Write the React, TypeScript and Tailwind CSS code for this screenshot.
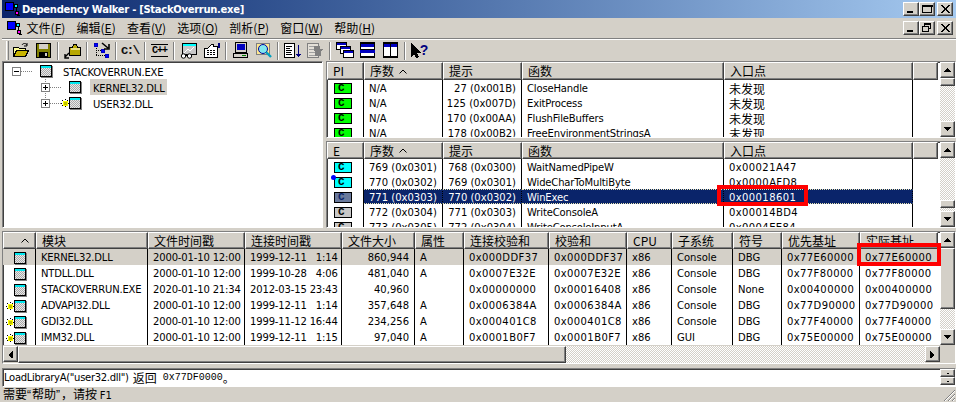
import type { ReactNode } from 'react'

const raised = 'bg-[#d4d0c8] border border-t-white border-l-white border-r-[#404040] border-b-[#404040] shadow-[inset_-1px_-1px_0_#808080]'
const sunken = 'border border-t-[#808080] border-l-[#808080] border-r-white border-b-white shadow-[inset_1px_1px_0_#404040]'
const track = 'bg-[repeating-conic-gradient(#d4d0c8_0_25%,#ffffff_0_50%)] bg-[length:2px_2px]'
const cjk = "[font-family:'Noto_Sans_CJK_SC',sans-serif] text-[12px]"
const listCols = 'grid-cols-[37px_79px_79px_202px_189px_25px]'
const moduleCols = 'grid-cols-[33px_112px_97px_97px_73px_49px_85px_78px_45px_61px_49px_78px_78px]'
const hex = 'tracking-[0.4px]'

function CaptionButton({ kind }: { kind: string }) {
  return (
    <div className={`w-[16px] h-[14px] flex items-center justify-center ${raised}`}>
      <svg width="12" height="10" viewBox="0 0 12 10" shapeRendering="crispEdges">
        {kind === 'min' && <rect x="2" y="7" width="6" height="2" fill="#000" />}
        {kind === 'max' && <path d="M1.5 1.5h9v7h-9z M1 1h10v1H1z" fill="none" stroke="#000" />}
        {kind === 'restore' && <path d="M3.5 2.5v-2h6v5h-2 M1.5 3.5h6v5h-6z M3 1h7 M1 3h7" fill="none" stroke="#000" />}
        {kind === 'close' && <path d="M2 1l8 8M3 1l8 8M10 1l-8 8M11 1l-8 8" stroke="#000" shapeRendering="auto" />}
      </svg>
    </div>
  )
}

function AppGlyph() {
  return (
    <svg width="16" height="16" viewBox="0 0 16 16" shapeRendering="crispEdges">
      <rect x="0" y="1" width="8" height="8" fill="#0000ff" stroke="#000" />
      <path d="M8 5h3v3M11 8v2" fill="none" stroke="#000" />
      <rect x="9" y="3" width="3" height="3" fill="#00ffff" stroke="#000" />
      <rect x="10" y="10" width="3" height="3" fill="#ff00ff" stroke="#000" />
      <path d="M12 14h3" stroke="#000" />
    </svg>
  )
}

function ModuleIcon({ spark }: { spark?: boolean }) {
  return (
    <span className="flex items-center">
      {spark && (
        <svg width="9" height="11" viewBox="0 0 9 11" className="mr-[-1px]" shapeRendering="crispEdges">
          <path d="M4 1v2M4 8v2M0 5h2M7 5h2M1 2l1 1M7 2l-1 1M1 8l1-1M7 8L6 7" stroke="#000" strokeDasharray="1 1" />
          <rect x="2" y="3" width="5" height="5" fill="#ffff00" />
          <rect x="3" y="4" width="3" height="3" fill="#c0c000" />
        </svg>
      )}
      <svg width="13" height="13" viewBox="0 0 13 13" shapeRendering="crispEdges">
        <defs>
          <pattern id="dither" width="2" height="2" patternUnits="userSpaceOnUse">
            <rect width="2" height="2" fill="#e8e8e8" />
            <rect width="1" height="1" fill="#a8a8a8" />
            <rect x="1" y="1" width="1" height="1" fill="#a8a8a8" />
          </pattern>
        </defs>
        <rect x="0.5" y="0.5" width="11" height="11" fill="url(#dither)" stroke="#000" />
        <rect x="1" y="1" width="10" height="2" fill="#00e8f0" />
        <path d="M1 12.5h11.5V1" fill="none" stroke="#808080" />
      </svg>
    </span>
  )
}

function BadgeC({ color, dot }: { color: string; dot?: boolean }) {
  return (
    <span className={`relative block w-[18px] h-[11px] border border-black ${color} text-[11px] leading-[9px] font-bold pl-[3px] [font-family:'Liberation_Mono',monospace] ${color === 'bg-[#6a7a9c]' ? 'text-[#0a246a]' : 'text-black'}`}>
      C
      {dot && <span className="absolute left-[-4px] top-[-3px] w-[5px] h-[5px] rounded-full bg-[#0000ff]" />}
    </span>
  )
}

function ToolIcon({ name }: { name: string }) {
  const common = { width: 18, height: 17, viewBox: '0 0 18 17', shapeRendering: 'crispEdges' as const }
  switch (name) {
    case 'open':
      return (
        <svg {...common}>
          <path d="M1 5h5l1 1h6v2H5L1 14z" fill="#ffff99" stroke="#000" />
          <path d="M4.5 8.5h12l-3 6H1.5z" fill="#c8b400" stroke="#000" />
          <path d="M10 3c1-2 4-2 5 0M15 1v3h-3" fill="none" stroke="#000" shapeRendering="auto" />
        </svg>
      )
    case 'save':
      return (
        <svg {...common}>
          <rect x="1.5" y="1.5" width="14" height="14" fill="#808000" stroke="#000" />
          <rect x="4" y="2" width="9" height="5" fill="#d4d0c8" />
          <rect x="4" y="10" width="9" height="5" fill="#000" />
          <rect x="10" y="11" width="2" height="3" fill="#d4d0c8" />
        </svg>
      )
    case 'module':
      return (
        <svg {...common}>
          <path d="M5.5 5.5h3l1-3h3l1 3h3v8h-11z" fill="#b8a800" stroke="#000" />
          <rect x="7" y="6" width="9" height="2" fill="#e8e080" />
          <path d="M5 11l-4 4M1 12v4h4" fill="none" stroke="#000" strokeWidth="1.4" shapeRendering="auto" />
        </svg>
      )
    case 'tree':
      return (
        <svg {...common}>
          <path d="M3 4v10M3 8h5M3 13h9" stroke="#000" strokeDasharray="1 1" />
          <rect x="1" y="1" width="3" height="3" fill="#0000ff" stroke="#0000c0" />
          <rect x="8" y="7" width="3" height="3" fill="#0000ff" stroke="#0000c0" />
          <rect x="12" y="12" width="3" height="3" fill="#0000ff" stroke="#0000c0" />
          <path d="M9 1l6 5M16 2v5h-5" fill="none" stroke="#000" strokeWidth="1.6" shapeRendering="auto" />
        </svg>
      )
    case 'drive':
      return <span className="text-[13px] font-bold leading-none text-[#101010] [font-family:'Liberation_Mono',monospace] tracking-[-2px] pr-[2px]">c:\</span>
    case 'cpp':
      return <span className="border-y-[1.5px] border-black px-[1px] text-[10px] font-bold leading-[11px] text-black [font-family:'Liberation_Mono',monospace] tracking-[-1px]">C++</span>
    case 'chart':
      return (
        <svg {...common}>
          <rect x="2.5" y="1.5" width="14" height="11" fill="#c8c8c8" stroke="#000" />
          <rect x="3" y="2" width="13" height="2" fill="#00ffff" />
          <path d="M4 11l4-4 2 2 4-4" fill="none" stroke="#fff" shapeRendering="auto" />
          <circle cx="3.5" cy="14" r="2.2" fill="#fff" stroke="#000" shapeRendering="auto" />
          <circle cx="9.5" cy="14" r="2.2" fill="#fff" stroke="#000" shapeRendering="auto" />
          <path d="M5 13h3" stroke="#000" />
        </svg>
      )
    case 'config':
      return (
        <svg {...common}>
          <path d="M1.5 6.5h3l4-4h2v2h4v11h-13z" fill="#fff" stroke="#000" />
          <path d="M4 8h8M4 10h8M4 12h8" stroke="#000" strokeDasharray="2 1" />
          <rect x="15" y="1" width="2" height="5" fill="#000080" />
        </svg>
      )
    case 'computer':
      return (
        <svg {...common}>
          <rect x="3.5" y="0.5" width="11" height="10" fill="#d4d0c8" stroke="#000" />
          <rect x="5" y="2" width="8" height="6" fill="#0000c0" />
          <rect x="1.5" y="11.5" width="14" height="4" fill="#d4d0c8" stroke="#000" />
          <rect x="10" y="13" width="4" height="1" fill="#008000" />
        </svg>
      )
    case 'search':
      return (
        <svg {...common}>
          <path d="M1.5 1.5h13v11h-13z" fill="#ffe890" stroke="#808080" />
          <circle cx="8" cy="7" r="4.5" fill="#80e8f0" stroke="#0000a0" shapeRendering="auto" />
          <path d="M11 10l5 5" stroke="#00a0c0" strokeWidth="2.4" shapeRendering="auto" />
        </svg>
      )
    case 'listdown':
      return (
        <svg {...common}>
          <rect x="0.5" y="1.5" width="10" height="14" fill="#fff" stroke="#000" />
          <path d="M2 4h6M2 6h4M2 8h6M2 10h5M2 12h6" stroke="#000" />
          <path d="M14 3v11" stroke="#000080" />
          <path d="M12 12h5M13 13h3M14 14h1" stroke="#000080" />
        </svg>
      )
    case 'disabled':
      return (
        <svg {...common}>
          <rect x="0.5" y="1.5" width="11" height="14" fill="#e4e0d8" stroke="#808080" />
          <path d="M2 4h6M2 7h6M2 10h6M2 13h6" stroke="#a0a0a0" />
          <path d="M7 4h6v3h3l-2 3v4H8z" fill="#808080" />
        </svg>
      )
    case 'cascade':
      return (
        <svg {...common}>
          <rect x="0.5" y="0.5" width="10" height="7" fill="#fff" stroke="#000" />
          <rect x="1" y="1" width="9" height="2" fill="#0000c0" />
          <rect x="4.5" y="4.5" width="10" height="7" fill="#fff" stroke="#000" />
          <rect x="5" y="5" width="9" height="2" fill="#0000c0" />
          <rect x="7.5" y="8.5" width="10" height="7" fill="#fff" stroke="#000" />
          <rect x="8" y="9" width="9" height="2" fill="#0000c0" />
        </svg>
      )
    case 'hsplit':
      return (
        <svg {...common}>
          <rect x="1.5" y="1" width="14" height="14" fill="#fff" stroke="#000" strokeWidth="1.4" />
          <rect x="2" y="2" width="13" height="3" fill="#0000c0" />
          <rect x="1" y="8" width="15" height="3" fill="#0000c0" />
          <path d="M1 7.5h15" stroke="#000" />
        </svg>
      )
    case 'vsplit':
      return (
        <svg {...common}>
          <rect x="1.5" y="1" width="14" height="14" fill="#fff" stroke="#000" strokeWidth="1.4" />
          <rect x="2" y="2" width="13" height="3" fill="#0000c0" />
          <path d="M8.5 1v14" stroke="#000" />
        </svg>
      )
    default:
      return (
        <span className="flex items-center">
          <svg width="10" height="15" viewBox="0 0 10 15" shapeRendering="crispEdges">
            <path d="M0 0v14l3-3 2 4 3-1-2-4h4z" fill="#000" />
          </svg>
          <span className="ml-[-1px] mt-[-2px] text-[14px] font-bold leading-none text-[#000080] [font-family:'Liberation_Sans',sans-serif]">?</span>
        </span>
      )
  }
}

function ToolButton({ name }: { name: string }) {
  return (
    <div className="w-[23px] h-[21px] flex items-center justify-center">
      <ToolIcon name={name} />
    </div>
  )
}

function ToolSep() {
  return <div className="w-[6px] h-[18px] mt-[2px] flex justify-center"><div className="w-[2px] h-full border-l border-l-[#808080] border-r border-r-white" /></div>
}

function ArrowButton({ dir, small }: { dir: string; small?: boolean }) {
  const d = dir === 'up' ? 'M4 2h1M3 3h3M2 4h5M1 5h7'
    : dir === 'down' ? 'M1 2h7M2 3h5M3 4h3M4 5h1'
    : dir === 'left' ? 'M6 0v8M5 1v6M4 2v4M3 3v2'
    : 'M2 0v8M3 1v6M4 2v4M5 3v2'
  return (
    <div className={`shrink-0 flex items-center justify-center ${small ? 'w-[15px] h-[8px]' : 'w-[15px] h-[16px]'} ${raised}`}>
      {small
        ? <span className="w-[2px] h-[1px] bg-black" />
        : <svg width="9" height="8" viewBox="0 0 9 8" shapeRendering="crispEdges"><path d={d} stroke="#000" transform="translate(0 .5)" /></svg>}
    </div>
  )
}

function VScroll({ thumbClass, trackAfter }: { thumbClass: string; trackAfter?: boolean }) {
  return (
    <div className="w-[15px] shrink-0 flex flex-col">
      <ArrowButton dir="up" />
      <div className={`flex-1 flex flex-col ${track}`}>
        {trackAfter && <div className="flex-1" />}
        <div className={`${thumbClass} ${raised}`} />
      </div>
      <ArrowButton dir="down" />
    </div>
  )
}

function HeaderCell({ children, className = '' }: { children?: ReactNode; className?: string }) {
  return (
    <div className={`${raised} ${cjk} pl-[5px] flex items-center overflow-hidden whitespace-nowrap leading-none ${className}`}>
      {children}
    </div>
  )
}

function Caret() {
  return (
    <svg width="8" height="5" viewBox="0 0 8 5" className="ml-[5px]">
      <path d="M0.5 4.5L4 1l3.5 3.5" fill="none" stroke="#000" />
    </svg>
  )
}

function Cell({ children, className = '' }: { children?: ReactNode; className?: string }) {
  return (
    <div className={`relative border-r border-r-black flex items-center whitespace-pre overflow-visible leading-none pt-[2px] ${className}`}>
      {children}
    </div>
  )
}

const imports = [
  ['N/A', '27 (0x001B)', 'CloseHandle'],
  ['N/A', '125 (0x007D)', 'ExitProcess'],
  ['N/A', '170 (0x00AA)', 'FlushFileBuffers'],
  ['N/A', '178 (0x00B2)', 'FreeEnvironmentStringsA'],
]

const exports = [
  { ord: '769 (0x0301)', hint: '768 (0x0300)', fn: 'WaitNamedPipeW', entry: '0x00021A47', color: 'bg-[#00ffff]' },
  { ord: '770 (0x0302)', hint: '769 (0x0301)', fn: 'WideCharToMultiByte', entry: '0x0000AFD8', color: 'bg-[#00ffff]', dot: true },
  { ord: '771 (0x0303)', hint: '770 (0x0302)', fn: 'WinExec', entry: '0x00018601', color: 'bg-[#6a7a9c]', selected: true },
  { ord: '772 (0x0304)', hint: '771 (0x0303)', fn: 'WriteConsoleA', entry: '0x00014BD4', color: 'bg-[#c8c8c8]' },
  { ord: '773 (0x0305)', hint: '772 (0x0304)', fn: 'WriteConsoleInputA', entry: '0x0004EE84', color: 'bg-[#c8c8c8]' },
]

const modules = [
  { spark: false, name: 'KERNEL32.DLL', file: '2000-01-10 12:00', link: '1999-12-11 \u20071:14', size: '860,944', attr: 'A', lc: '0x000DDF37', cs: '0x000DDF37', sys: 'Console', sym: 'DBG', pref: '0x77E60000', act: '0x77E60000' },
  { spark: false, name: 'NTDLL.DLL', file: '2000-01-10 12:00', link: '1999-10-28 \u20074:06', size: '481,040', attr: 'A', lc: '0x0007E32E', cs: '0x0007E32E', sys: 'Console', sym: 'DBG', pref: '0x77F80000', act: '0x77F80000' },
  { spark: false, name: 'STACKOVERRUN.EXE', file: '2020-01-10 21:34', link: '2012-03-15 23:43', size: '40,960', attr: '', lc: '0x00000000', cs: '0x00016408', sys: 'Console', sym: 'None', pref: '0x00400000', act: '0x00400000' },
  { spark: true, name: 'ADVAPI32.DLL', file: '2000-01-10 12:00', link: '1999-12-11 \u20071:14', size: '357,648', attr: 'A', lc: '0x0006384A', cs: '0x0006384A', sys: 'Console', sym: 'DBG', pref: '0x77D90000', act: '0x77D90000' },
  { spark: true, name: 'GDI32.DLL', file: '2000-01-10 12:00', link: '1999-11-12 16:44', size: '234,256', attr: 'A', lc: '0x000401C8', cs: '0x000401C8', sys: 'Console', sym: 'DBG', pref: '0x77F40000', act: '0x77F40000' },
  { spark: true, name: 'IMM32.DLL', file: '2000-01-10 12:00', link: '1999-12-11 \u20071:15', size: '97,040', attr: 'A', lc: '0x0001B0F7', cs: '0x0001B0F7', sys: 'GUI', sym: 'DBG', pref: '0x75E00000', act: '0x75E00000' },
]

const menus = [
  ['文件(', 'F', ')'],
  ['编辑(', 'E', ')'],
  ['查看(', 'V', ')'],
  ['选项(', 'O', ')'],
  ['剖析(', 'P', ')'],
  ['窗口(', 'W', ')'],
  ['帮助(', 'H', ')'],
]

const tools = [
  ['open', 'save'], ['module'], ['tree'], ['drive'], ['cpp'], ['chart', 'config'],
  ['computer', 'search'], ['listdown', 'disabled'], ['cascade', 'hsplit', 'vsplit'], ['help'],
]

function TreeRow({ depth, open, spark, label, selected, last }: { depth: number; open?: boolean; spark?: boolean; label: string; selected?: boolean; last?: boolean }) {
  return (
    <div className={`h-[16px] flex items-center ${depth ? 'pl-[38px]' : 'pl-[9px]'}`}>
      <svg width="28" height="16" viewBox="0 0 28 16" className="shrink-0" shapeRendering="crispEdges">
        {depth > 0 && !last && <path d="M4.5 12v4" stroke="#808080" strokeDasharray="1 1" />}
        {depth > 0 && <path d="M4.5 0v4" stroke="#808080" strokeDasharray="1 1" />}
        <path d="M9 8.5h11" stroke="#808080" strokeDasharray="1 1" />
        <rect x="0.5" y="4.5" width="8" height="8" fill="#fff" stroke="#808080" />
        <path d="M2 8.5h5" stroke="#000" />
        {!open && <path d="M4.5 6v5" stroke="#000" />}
      </svg>
      <span className={spark ? 'ml-[-8px]' : ''}><ModuleIcon spark={spark} /></span>
      <span className={`h-[16px] flex items-center pl-[3px] pr-[2px] pt-[2px] tracking-[-0.2px] ${selected ? 'bg-[#d4d0c8]' : ''} ${depth ? 'ml-[8px]' : 'ml-[7px]'}`}>{label}</span>
    </div>
  )
}

export default function App() {
  return (
    <div className="w-[956px] h-[402px] overflow-hidden bg-[#d4d0c8] pl-[2px] flex flex-col text-black text-[10px] [font-family:'DejaVu_Sans','Noto_Sans_CJK_SC',sans-serif]">
      {/* title bar */}
      <div className="h-[18px] shrink-0 flex items-center justify-between pr-[3px] bg-gradient-to-r from-[#0a246a] to-[#a6caf0]">
        <div className="flex items-center gap-[1px] pl-[3px] text-white font-bold text-[10px] tracking-[-0.3px]">
          <AppGlyph />
          <span>Dependency Walker - [StackOverrun.exe]</span>
        </div>
        <div className="flex">
          <CaptionButton kind="min" />
          <CaptionButton kind="max" />
          <div className="w-[2px]" />
          <CaptionButton kind="close" />
        </div>
      </div>

      {/* menu bar */}
      <div className="h-[20px] shrink-0 flex items-center justify-between pr-[3px]">
        <div className="flex items-center">
          <div className="w-[20px] pl-[5px]"><AppGlyph /></div>
          <div className="flex ml-[-1px]">
            {menus.map((m) => (
              <span key={m[1]} className={`px-[5.6px] ${cjk} leading-none whitespace-nowrap`}>
                {m[0]}<span className="underline">{m[1]}</span>{m[2]}
              </span>
            ))}
          </div>
        </div>
        <div className="flex">
          <CaptionButton kind="min" />
          <CaptionButton kind="restore" />
          <div className="w-[2px]" />
          <CaptionButton kind="close" />
        </div>
      </div>
      <div className="h-[2px] shrink-0 border-t border-t-[#808080] border-b border-b-white" />

      {/* toolbar */}
      <div className="h-[21px] shrink-0 flex items-start pl-[4px]">
        <div className="w-[3px] h-[19px] mt-[1px] border-l border-l-white border-r border-r-[#808080]" />
        {tools.map((group, i) => (
          <div key={i} className="flex">
            {i > 0 && <ToolSep />}
            {group.map((t) => <ToolButton key={t} name={t} />)}
          </div>
        ))}
      </div>

      {/* upper panes */}
      <div className="h-[167px] shrink-0 flex gap-[3px]">
        <div className={`w-[321px] shrink-0 bg-white pt-[1px] ${sunken}`}>
          <TreeRow depth={0} open label="STACKOVERRUN.EXE" />
          <TreeRow depth={1} label="KERNEL32.DLL" selected />
          <TreeRow depth={1} spark last label="USER32.DLL" />
        </div>
        <div className="flex-1 flex flex-col gap-[3px] min-w-0">
          <div className={`h-[77px] shrink-0 flex overflow-hidden bg-white ${sunken}`}>
            <div className="flex-1 overflow-hidden">
              <div className={`grid ${listCols} h-[18px]`}>
                <HeaderCell>PI</HeaderCell>
                <HeaderCell>序数<Caret /></HeaderCell>
                <HeaderCell>提示</HeaderCell>
                <HeaderCell>函数</HeaderCell>
                <HeaderCell>入口点</HeaderCell>
                <HeaderCell />
              </div>
              {imports.map((r) => (
                <div key={r[2]} className={`grid ${listCols} h-[15px]`}>
                  <Cell className="pl-[7px] pt-0"><BadgeC color="bg-[#00ff00]" /></Cell>
                  <Cell className="pl-[5px]">{r[0]}</Cell>
                  <Cell className="justify-end pr-[5px]">{r[1]}</Cell>
                  <Cell className="pl-[5px] tracking-[-0.15px]">{r[2]}</Cell>
                  <Cell className={`pl-[5px] ${cjk}`}>未发现</Cell>
                  <div />
                </div>
              ))}
            </div>
            <VScroll thumbClass="h-[8px]" />
          </div>
          <div className={`flex-1 flex overflow-hidden bg-white ${sunken}`}>
            <div className="flex-1 overflow-hidden">
              <div className={`grid ${listCols} h-[17px]`}>
                <HeaderCell>E</HeaderCell>
                <HeaderCell>序数<Caret /></HeaderCell>
                <HeaderCell>提示</HeaderCell>
                <HeaderCell>函数</HeaderCell>
                <HeaderCell>入口点</HeaderCell>
                <HeaderCell />
              </div>
              {exports.map((r) => {
                const sel = r.selected ? 'bg-[#0a246a] text-white border-y border-dotted border-y-[#e8e4b0]' : ''
                return (
                  <div key={r.fn} className={`grid ${listCols} h-[15px]`}>
                    <Cell className="pl-[7px] pt-0"><BadgeC color={r.color} dot={r.dot} /></Cell>
                    <Cell className={`pl-[5px] ${sel}`}>{r.ord}</Cell>
                    <Cell className={`justify-end pr-[5px] ${sel}`}>{r.hint}</Cell>
                    <Cell className={`pl-[5px] tracking-[-0.15px] ${sel}`}>{r.fn}</Cell>
                    <Cell className={`pl-[5px] ${hex} ${sel}`}>
                      {r.entry}
                      {r.selected && <span className="absolute left-[-7px] top-[-5px] w-[91px] h-[21px] border-[4px] border-[#ff0000] z-10" />}
                    </Cell>
                    <div />
                  </div>
                )
              })}
            </div>
            <VScroll thumbClass="h-[8px] mb-[3px]" trackAfter />
          </div>
        </div>
      </div>

      {/* module list */}
      <div className={`h-[133px] shrink-0 mt-[3px] flex flex-col bg-white ${sunken}`}>
        <div className="h-[113px] flex">
          <div className="flex-1">
            <div className={`grid ${moduleCols} h-[17px]`}>
              <HeaderCell className="justify-center pl-0"><Caret /></HeaderCell>
              {['模块', '文件时间戳', '连接时间戳', '文件大小', '属性', '连接校验和', '校验和', 'CPU', '子系统', '符号', '优先基址', '实际基址'].map((h) => (
                <HeaderCell key={h}>{h}</HeaderCell>
              ))}
            </div>
            {modules.map((m, i) => (
              <div key={m.name} className={`grid ${moduleCols} h-[16px] ${i === 0 ? 'bg-[#d4d0c8]' : ''}`}>
                <Cell className="justify-end pr-[8px] pt-0"><ModuleIcon spark={m.spark} /></Cell>
                <Cell className="pl-[5px] tracking-[-0.2px]">{m.name}</Cell>
                <Cell className="pl-[5px] tracking-[-0.15px]">{m.file}</Cell>
                <Cell className="pl-[5px] tracking-[-0.15px]">{m.link}</Cell>
                <Cell className="justify-end pr-[5px]">{m.size}</Cell>
                <Cell className="pl-[5px]">{m.attr}</Cell>
                <Cell className={`pl-[5px] ${hex}`}>{m.lc}</Cell>
                <Cell className={`pl-[5px] ${hex}`}>{m.cs}</Cell>
                <Cell className="pl-[5px]">x86</Cell>
                <Cell className="pl-[5px]">{m.sys}</Cell>
                <Cell className="pl-[5px]">{m.sym}</Cell>
                <Cell className={`pl-[5px] ${hex}`}>{m.pref}</Cell>
                <Cell className={`pl-[5px] border-r-0 ${hex}`}>
                  {m.act}
                  {i === 0 && <span className="absolute left-[-3px] top-[-6px] w-[84px] h-[23px] border-[4px] border-[#ff0000] z-10" />}
                </Cell>
              </div>
            ))}
          </div>
          <div className="w-[15px] shrink-0 flex flex-col">
            <ArrowButton dir="up" />
            <div className={`flex-1 flex flex-col ${track}`}>
              <div className={`h-[61px] ${raised}`} />
            </div>
            <ArrowButton dir="down" />
          </div>
        </div>
        <div className="flex-1 flex pt-[1px] bg-[#d4d0c8]">
          <ArrowButton dir="left" />
          <div className={`flex-1 flex ${track}`}>
            <div className={`w-[548px] ${raised}`} />
          </div>
          <ArrowButton dir="right" />
          <div className="w-[15px]" />
        </div>
      </div>

      {/* log view */}
      <div className={`h-[19px] shrink-0 mt-[4px] flex bg-white overflow-hidden ${sunken}`}>
        <div className={`flex-1 pl-[1px] flex items-center leading-none whitespace-pre ${cjk}`}>
          <span className="text-[10px] tracking-[-0.3px] [font-family:'DejaVu_Sans',sans-serif]">LoadLibraryA("user32.dll")</span>
          <span className="ml-[4px]">返回</span>
          <span className="ml-[6px] text-[10px] [font-family:'Liberation_Mono',monospace]">0x77DF0000</span>
          <span>。</span>
        </div>
        <div className="w-[15px] shrink-0 flex flex-col">
          <ArrowButton dir="up" small />
          <ArrowButton dir="down" small />
        </div>
      </div>

      {/* status bar */}
      <div className="h-[15px] shrink-0 flex items-center justify-between">
        <span className={`pl-[1px] leading-none whitespace-pre ${cjk}`}>
          需要<span className="[font-family:'Liberation_Sans',sans-serif] tracking-[1px]">“</span>帮助<span className="[font-family:'Liberation_Sans',sans-serif] tracking-[1px]">”</span>，请按 <span className="text-[10px] [font-family:'DejaVu_Sans',sans-serif]">F1</span>
        </span>
        <svg width="13" height="13" viewBox="0 0 13 13" className="self-end" shapeRendering="auto">
          <path d="M12 1L1 12M12 5l-7 7M12 9l-3 3" stroke="#808080" />
          <path d="M12 2L2 12M12 6l-6 6M12 10l-2 2" stroke="#fff" />
        </svg>
      </div>
    </div>
  )
}
